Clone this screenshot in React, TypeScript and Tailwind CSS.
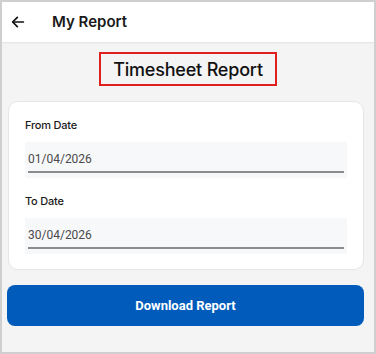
import React from "react";

function Field({ label, value, top }: { label: string; value: string; top: string }) {
  return (
    <div className={`flex flex-col ${top}`}>
      <div className="h-[16px] text-[11px] font-medium leading-[16px] text-[#1a1a1a] tracking-[-0.2px]" style={{ fontFamily: "Inter, sans-serif" }}>
        {label}
      </div>
      <div className="mt-[9px] h-[36px] bg-[#f7f8fa] px-[3px] pt-[9px]">
        <div className="h-[22px] border-b-2 border-[#8c8c8c] text-[12px] leading-[16px] text-[#4a4a4a]" style={{ fontFamily: "Roboto, sans-serif" }}>
          {value}
        </div>
      </div>
    </div>
  );
}

export default function App() {
  return (
    <div className="h-[354px] w-[376px] overflow-hidden border-2 border-[#cfcfcf] bg-[#f4f4f4]">
      <div className="flex h-[40px] items-center bg-white shadow-[0_1px_2px_rgba(0,0,0,0.08)]" style={{ fontFamily: "Inter, sans-serif" }}>
        <svg className="ml-[8px]" width="16" height="16" viewBox="0 0 24 24" fill="none" stroke="#111" strokeWidth="2.6" strokeLinecap="round" strokeLinejoin="round">
          <path d="M20 12H5" />
          <path d="M11 5l-7 7 7 7" />
        </svg>
        <span className="ml-[26px] text-[15px] font-semibold text-[#1a1a1a]">My Report</span>
      </div>
      <div className="mt-[10px] flex justify-center">
        <div className="flex h-[34px] w-[178px] items-center justify-center border-2 border-[#e0201e] text-[18px] font-medium text-[#111] tracking-[-0.2px]" style={{ fontFamily: "Inter, sans-serif" }}>
          Timesheet Report
        </div>
      </div>
      <div className="ml-[6px] mr-[10px] mt-[15px] flex h-[169px] flex-col rounded-[10px] border border-[#e6e6e6] bg-white px-[16px] pt-[15px]">
        <Field label="From Date" value="01/04/2026" top="" />
        <Field label="To Date" value="30/04/2026" top="mt-[15px]" />
      </div>
      <div className="ml-[5px] mr-[10px] mt-[15px] flex h-[41px] items-center justify-center rounded-[8px] bg-[#005bbb] text-[13px] font-bold text-white" style={{ fontFamily: "Roboto, sans-serif" }}>
        Download Report
      </div>
    </div>
  );
}
